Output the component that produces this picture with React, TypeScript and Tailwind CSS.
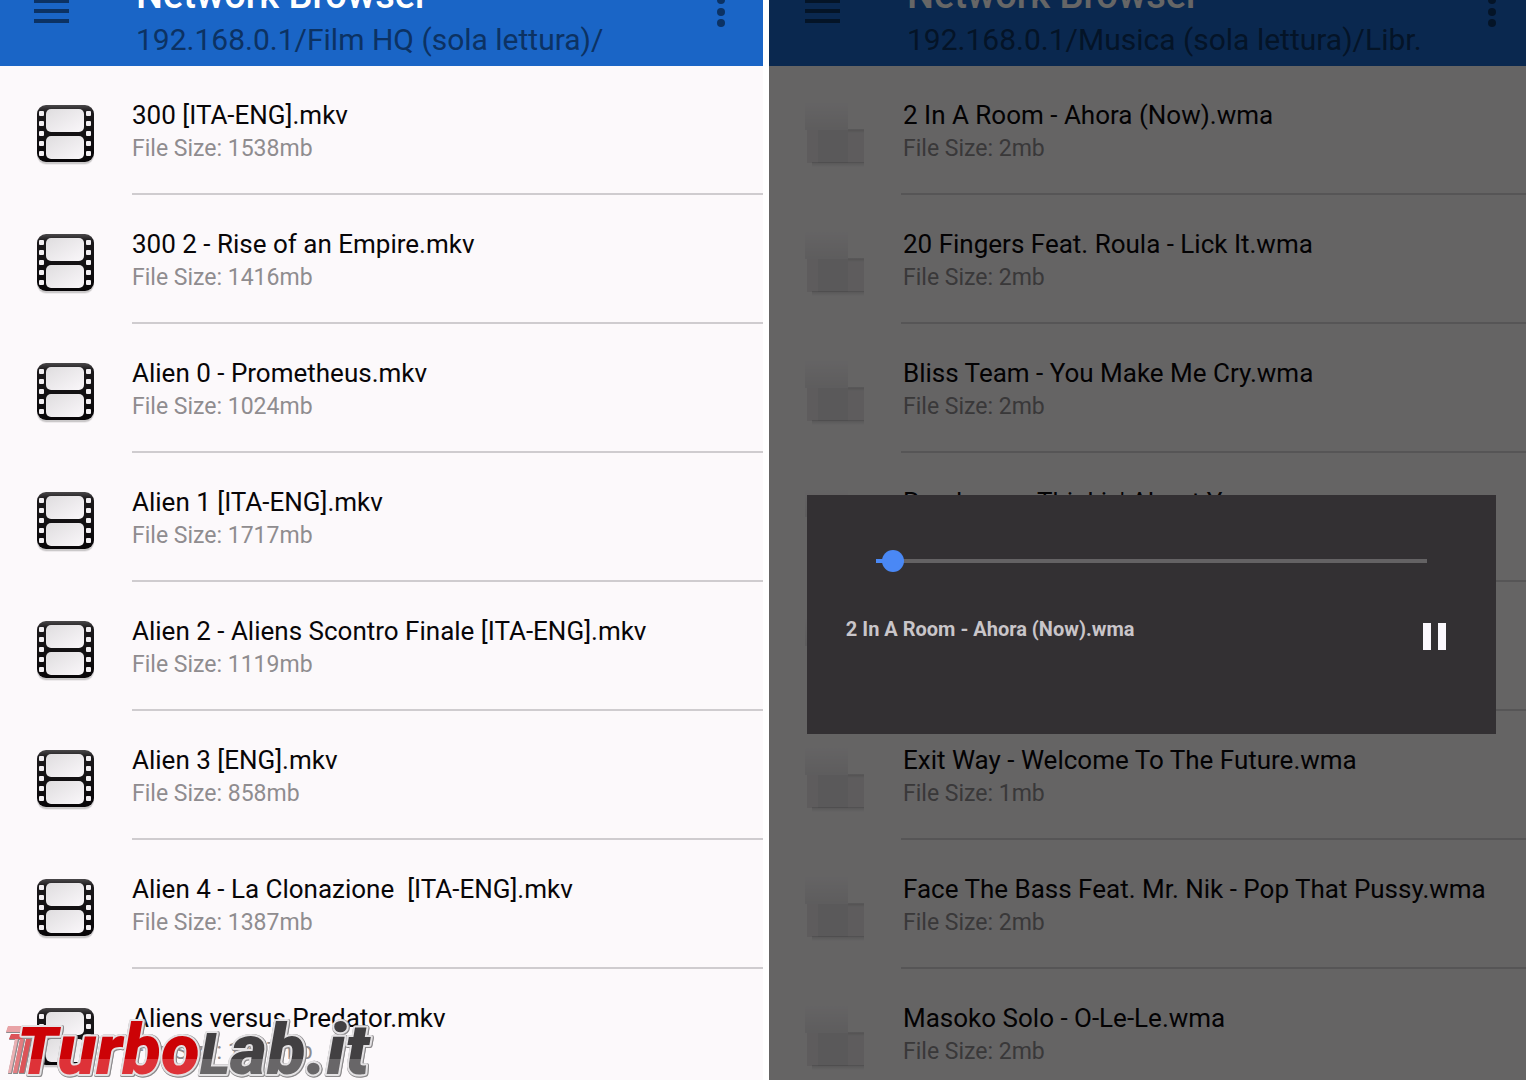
import React from "react";

type Entry = { name: string; size: string };

const films: Entry[] = [
  { name: "300 [ITA-ENG].mkv", size: "File Size: 1538mb" },
  { name: "300 2 - Rise of an Empire.mkv", size: "File Size: 1416mb" },
  { name: "Alien 0 - Prometheus.mkv", size: "File Size: 1024mb" },
  { name: "Alien 1 [ITA-ENG].mkv", size: "File Size: 1717mb" },
  { name: "Alien 2 - Aliens Scontro Finale [ITA-ENG].mkv", size: "File Size: 1119mb" },
  { name: "Alien 3 [ENG].mkv", size: "File Size: 858mb" },
  { name: "Alien 4 - La Clonazione  [ITA-ENG].mkv", size: "File Size: 1387mb" },
  { name: "Aliens versus Predator.mkv", size: "File Size: 1397mb" },
];

const songs: Entry[] = [
  { name: "2 In A Room - Ahora (Now).wma", size: "File Size: 2mb" },
  { name: "20 Fingers Feat. Roula - Lick It.wma", size: "File Size: 2mb" },
  { name: "Bliss Team - You Make Me Cry.wma", size: "File Size: 2mb" },
  { name: "Randevou - Thinkin' About You", size: "" },
  { name: "", size: "" },
  { name: "Exit Way - Welcome To The Future.wma", size: "File Size: 1mb" },
  { name: "Face The Bass Feat. Mr. Nik - Pop That Pussy.wma", size: "File Size: 2mb" },
  { name: "Masoko Solo - O-Le-Le.wma", size: "File Size: 2mb" },
];

function FilmIcon() {
  const holes = [11, 21, 31, 41, 51];
  return (
    <svg viewBox="0 0 64 66" className="h-[66px] w-16 shrink-0" aria-hidden="true">
      <defs>
        <linearGradient id="frame" x1="0" y1="0" x2="1" y2="1">
          <stop offset="0" stopColor="#dfdddf" />
          <stop offset="1" stopColor="#faf7fa" />
        </linearGradient>
        <linearGradient id="body" x1="0" y1="0" x2="0" y2="1">
          <stop offset="0" stopColor="#4a484a" />
          <stop offset="0.12" stopColor="#1c1a1c" />
          <stop offset="1" stopColor="#080608" />
        </linearGradient>
      </defs>
      <rect x="4" y="7" width="57" height="56" rx="9" fill="#000" opacity="0.06" />
      <rect x="4" y="6" width="57" height="56" rx="9" fill="#000" opacity="0.14" />
      <rect x="4" y="3" width="57" height="57" rx="9" fill="url(#body)" />
      <rect x="13" y="7" width="38" height="23" rx="5" fill="url(#frame)" />
      <rect x="13" y="34" width="38" height="23" rx="5" fill="url(#frame)" />
      {holes.map((y) => (
        <g key={y} fill="#f2eff2">
          <rect x="6" y={y - 2} width="5" height="5" rx="1" />
          <rect x="53" y={y - 2} width="5" height="5" rx="1" />
        </g>
      ))}
    </svg>
  );
}

function FileIcon() {
  return (
    <svg viewBox="0 0 64 66" className="h-[66px] w-16 shrink-0" aria-hidden="true">
      <defs>
        <linearGradient id="sheet" x1="0" y1="0" x2="0" y2="1">
          <stop offset="0" stopColor="#000" stopOpacity="0" />
          <stop offset="1" stopColor="#000" stopOpacity="0.07" />
        </linearGradient>
        <linearGradient id="edge" x1="0" y1="0" x2="0" y2="1">
          <stop offset="0" stopColor="#000" stopOpacity="0.14" />
          <stop offset="1" stopColor="#000" stopOpacity="0" />
        </linearGradient>
      </defs>
      <path d="M3 0H46V28H3Z" fill="url(#sheet)" />
      <path d="M5 28H62V61H5Z" fill="#000" opacity="0.07" />
      <path d="M16 28H46V61H16Z" fill="#000" opacity="0.03" />
      <path d="M46 27H62V31H46Z" fill="url(#edge)" />
      <path d="M10 60H62V65H10Z" fill="url(#edge)" />
    </svg>
  );
}

function Header({ path, padding }: { path: string; padding: string }) {
  return (
    <header className={`flex h-[66px] shrink-0 items-end overflow-hidden bg-[#1a65c6] ${padding}`}>
      <button type="button" aria-label="Menu" className="mb-[42px] mr-[66px] h-7 w-9 shrink-0">
        <svg viewBox="0 0 36 28" className="h-7 w-9" fill="#0c3263" aria-hidden="true">
          <rect x="0" y="3" width="35" height="4" />
          <rect x="0" y="13" width="35" height="4" />
          <rect x="0" y="23" width="35" height="4" />
        </svg>
      </button>
      <div className="min-w-0 grow whitespace-nowrap pb-2">
        <h1 className="mb-1.5 text-[38px] font-medium leading-[42px] text-white">Network Browser</h1>
        <p className="text-[30px] leading-9 text-[#0c3263]">{path}</p>
      </div>
      <button type="button" aria-label="More options" className="mb-[38px] h-8 w-2.5 shrink-0">
        <svg viewBox="0 0 10 32" className="h-8 w-2.5" fill="#0c3263" aria-hidden="true">
          <circle cx="5" cy="4" r="4" />
          <circle cx="5" cy="16" r="4" />
          <circle cx="5" cy="27" r="4" />
        </svg>
      </button>
    </header>
  );
}

function Row({ entry, kind }: { entry: Entry; kind: "film" | "file" }) {
  return (
    <li className="flex h-[129px] shrink-0 gap-[35px] pl-[33px]">
      <div className="pt-9">{kind === "film" ? <FilmIcon /> : <FileIcon />}</div>
      <div
        className={
          kind === "film"
            ? "min-w-0 grow whitespace-pre border-b-2 border-[#cfcccf] pt-[33px]"
            : "min-w-0 grow whitespace-pre border-b-2 border-[#d8d5d8] pl-0.5 pt-[33px]"
        }
      >
        <p className="text-[26px] leading-8 text-[#080608]">{entry.name}</p>
        <p className="text-[23px] leading-9 text-[#8f8c8f]">{entry.size}</p>
      </div>
    </li>
  );
}

function Player() {
  return (
    <div
      role="dialog"
      aria-label="Audio player"
      className="absolute left-[5%] right-[4%] top-[495px] flex h-[239px] flex-col bg-[#333033] pl-[39px] pr-[49px]"
    >
      <input
        type="range"
        aria-label="Playback position"
        min={0}
        max={1000}
        defaultValue={12}
        className="ml-[30px] mr-5 mt-[55px] h-[22px] appearance-none bg-transparent [&::-webkit-slider-runnable-track]:h-1 [&::-webkit-slider-runnable-track]:bg-[linear-gradient(to_right,#4a88f5_12px,#646264_12px)] [&::-webkit-slider-thumb]:-mt-[9px] [&::-webkit-slider-thumb]:size-[22px] [&::-webkit-slider-thumb]:appearance-none [&::-webkit-slider-thumb]:rounded-full [&::-webkit-slider-thumb]:bg-[#4a88f5]"
      />
      <div className="mt-[45px] flex items-start justify-between">
        <p className="text-[20px] font-bold leading-6 text-[#c9c5c9]">2 In A Room - Ahora (Now).wma</p>
        <button type="button" aria-label="Pause" className="mt-1.5 h-7 w-6">
          <svg viewBox="0 0 24 28" className="h-7 w-6" fill="#fbf8fd" aria-hidden="true">
            <rect x="0" y="0" width="8" height="27" />
            <rect x="15" y="0" width="8" height="27" />
          </svg>
        </button>
      </div>
    </div>
  );
}

function Logo() {
  return (
    <svg
      viewBox="0 0 390 72"
      className="absolute bottom-0 left-0 h-[72px] w-[390px] [filter:drop-shadow(1px_0_0_#8c8a8c)_drop-shadow(0_1px_0_#8c8a8c)]"
      role="img"
      aria-label="TurboLab.it"
    >
      <defs>
        <linearGradient id="red" gradientUnits="userSpaceOnUse" x1="0" y1="0" x2="0" y2="72">
          <stop offset="0.71" stopColor="#cc0206" />
          <stop offset="0.71" stopColor="#de3238" />
        </linearGradient>
        <linearGradient id="grey" gradientUnits="userSpaceOnUse" x1="0" y1="0" x2="0" y2="72">
          <stop offset="0.71" stopColor="#424042" />
          <stop offset="0.71" stopColor="#686668" />
        </linearGradient>
      </defs>
      <path d="M8 18H24L22 24H6Z" fill="#e9a3a6" />
      <path d="M11 26H24L22 31H9Z" fill="#dc5358" />
      <path d="M15 31H18L11 65H8Z" fill="#eab0b3" />
      <path d="M20 31H24L17 65H13Z" fill="#e27c80" />
      <path d="M26 31H31L24 65H19Z" fill="#dc5358" />
      <text
        y="66"
        fontFamily="Roboto, sans-serif"
        fontSize="71"
        fontWeight="900"
        fontStyle="italic"
        stroke="#e4e2e4"
        strokeWidth="4"
        strokeLinejoin="round"
        paintOrder="stroke"
      >
        <tspan x="17" fill="url(#red)" fontSize="66">T</tspan>
        <tspan fill="url(#red)">urbo</tspan>
        <tspan fill="url(#grey)" fontSize="58">L</tspan>
        <tspan fill="url(#grey)">ab.it</tspan>
      </text>
    </svg>
  );
}

export default function App() {
  return (
    <div className="relative grid h-screen grid-cols-[763fr_757fr] gap-1.5 overflow-hidden bg-white font-['Roboto',sans-serif]">
      <section className="flex min-w-0 flex-col overflow-hidden bg-[#fcf9fb]">
        <Header path="192.168.0.1/Film HQ (sola lettura)/" padding="pl-[34px] pr-[37px]" />
        <ul>
          {films.map((f) => (
            <Row key={f.name} entry={f} kind="film" />
          ))}
        </ul>
      </section>
      <section className="relative flex min-w-0 flex-col overflow-hidden bg-[#fcf9fb]">
        <Header path="192.168.0.1/Musica (sola lettura)/Libr." padding="pl-9 pr-[29px]" />
        <ul>
          {songs.map((s, i) => (
            <Row key={i} entry={s} kind="file" />
          ))}
        </ul>
        <div className="absolute inset-0 bg-black/60" />
        <Player />
      </section>
      <Logo />
    </div>
  );
}
